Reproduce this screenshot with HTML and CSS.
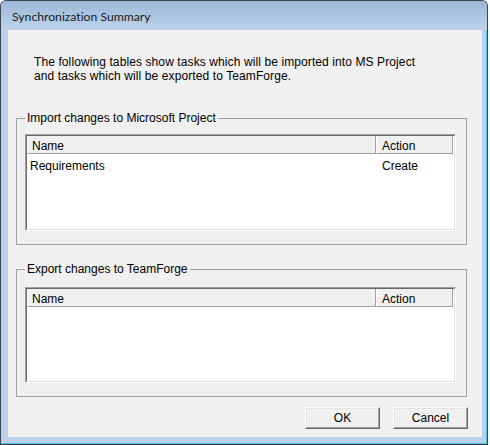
FILE: index.html
```html
<!DOCTYPE html>
<html>
<head>
<meta charset="utf-8">
<link rel="stylesheet" href="styles.css">
</head>
<body>
<div class="window">
  <div class="titlebar"><span class="title">Synchronization Summary</span></div>
  <div class="client">
    <p class="intro">The following tables show tasks which will be imported into MS Project<br>and tasks which will be exported to TeamForge.</p>
    <fieldset class="group group-import">
      <legend>Import changes to Microsoft Project</legend>
      <div class="list">
        <div class="list-inner">
          <div class="list-header">
            <div class="col col-name">Name</div>
            <div class="col col-action">Action</div>
          </div>
          <div class="list-body">
            <div class="row">
              <div class="cell cell-name">Requirements</div>
              <div class="cell cell-action">Create</div>
            </div>
          </div>
        </div>
      </div>
    </fieldset>
    <fieldset class="group group-export">
      <legend>Export changes to TeamForge</legend>
      <div class="list list-short">
        <div class="list-inner">
          <div class="list-header">
            <div class="col col-name">Name</div>
            <div class="col col-action">Action</div>
          </div>
          <div class="list-body"></div>
        </div>
      </div>
    </fieldset>
    <div class="buttons">
      <button class="btn">OK</button>
      <button class="btn">Cancel</button>
    </div>
  </div>
</div>
</body>
</html>
```
FILE: styles.css
```css
html, body {
  margin: 0;
  padding: 0;
  background: #ffffff;
}
body {
  font-family: "Liberation Sans", Arial, sans-serif;
  font-size: 12px;
  color: #000;
}
.window {
  box-sizing: border-box;
  width: 488px;
  height: 445px;
  border: 1px solid #3d4650;
  border-bottom: 1px solid #2a3a44;
  border-radius: 6px 6px 0 0;
  background: #b9d1ea;
  box-shadow: inset -1px -1px 0 #4fc6e0;
  display: flex;
  flex-direction: column;
  padding: 0 5px 7px 7px;
}
.titlebar {
  height: 29px;
  margin: 0 -5px 0 -7px;
  padding: 8px 0 0 11px;
  border-radius: 5px 5px 0 0;
  background: linear-gradient(#9cb8d8, #bcd3eb);
  box-sizing: border-box;
}
.title {
  display: block;
  font-family: Lato, "Open Sans", sans-serif;
  font-size: 12.2px;
  line-height: 16px;
  font-variant-ligatures: none;
  color: #1a1a1a;
}
.client {
  width: 474px;
  height: 407px;
  background: #f0f0f0;
  display: flex;
  flex-direction: column;
}
.intro {
  margin: 25px 0 0 26px;
  line-height: 14px;
  letter-spacing: 0.1px;
}
.group {
  margin: 28px 15px 0 8px;
  padding: 9px 10px 13px 8px;
  border: 1px solid #a0a0a0;
  min-width: 0;
}
.group-export {
  margin-top: 17px;
  padding-top: 11px;
}
.group legend {
  padding: 0 2px;
  line-height: 14px;
}
.list {
  height: 97px;
  box-sizing: border-box;
  border: 1px solid;
  border-color: #a0a0a0 #ffffff #ffffff #a0a0a0;
}
.list-short {
  height: 96px;
}
.list-inner {
  box-sizing: border-box;
  height: 100%;
  border: 1px solid;
  border-color: #696969 #e3e3e3 #e3e3e3 #696969;
  background: #ffffff;
}
.list-header {
  display: flex;
  height: 18px;
}
.col {
  box-sizing: border-box;
  background: #f0f0f0;
  border-right: 1px solid #a0a0a0;
  border-bottom: 1px solid #a0a0a0;
  border-left: 1px solid #ffffff;
  padding: 4px 0 0 4px;
  line-height: 13px;
}
.col-name {
  width: 349px;
}
.col-action {
  width: 77px;
  padding-left: 5px;
}
.row {
  display: flex;
  padding-top: 6px;
  line-height: 13px;
}
.cell-name {
  width: 349px;
  padding-left: 3px;
  box-sizing: border-box;
}
.cell-action {
  padding-left: 6px;
}
.buttons {
  display: flex;
  justify-content: flex-end;
  gap: 13px;
  margin: 10px 14px 0 0;
}
.btn {
  box-sizing: border-box;
  width: 75px;
  height: 22px;
  margin: 0;
  padding: 0;
  font-family: "Liberation Sans", Arial, sans-serif;
  font-size: 12px;
  color: #000;
  background: #f0f0f0;
  border: 1px solid;
  border-color: #ffffff #696969 #696969 #ffffff;
  box-shadow: inset -1px -1px 0 #a0a0a0, inset 1px 1px 0 #e3e3e3;
}
```
